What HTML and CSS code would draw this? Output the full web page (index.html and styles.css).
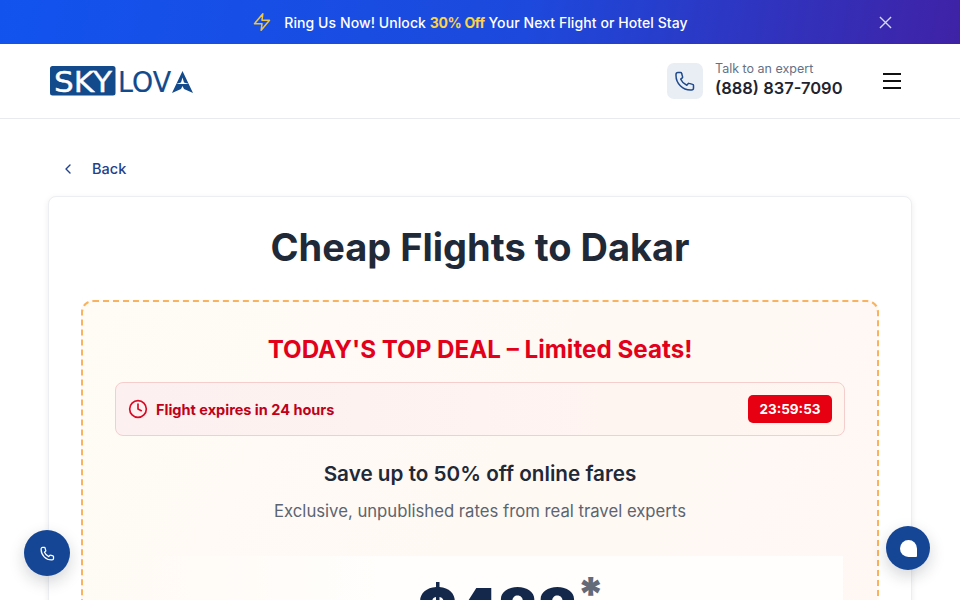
FILE: index.html
```html
<!DOCTYPE html>
<html lang="en">
<head>
<meta charset="utf-8">
<title>Cheap Flights to Dakar</title>
<link rel="stylesheet" href="styles.css">
</head>
<body>
<div class="promo">
  <div class="promo-msg">
    <svg class="promo-bolt" viewBox="0 0 24 24" fill="none" stroke="currentColor" stroke-width="1.8" stroke-linejoin="round" stroke-linecap="round"><path d="M13 2 3 14h9l-1 8 10-12h-9l1-8z"/></svg>
    <span>Ring Us Now! Unlock <b class="promo-hl">30% Off</b> Your Next Flight or Hotel Stay</span>
  </div>
  <svg class="promo-close" viewBox="0 0 14 14" fill="none" stroke="currentColor" stroke-width="1.4"><path d="M1 1l12 12M13 1 1 13"/></svg>
</div>
<header class="topbar">
  <svg class="logo" viewBox="0 0 144 30" role="img" aria-label="SKYLOVA">
    <rect x="0" y="0" width="65.500" height="29.500" rx="2.500" fill="#124a8c"/>
    <text class="logo-sky" x="4" y="26" textLength="58" lengthAdjust="spacingAndGlyphs">SKY</text>
    <text class="logo-lova" x="68" y="26" textLength="53" lengthAdjust="spacingAndGlyphs">LOV</text>
    <path d="M132.500 5 122 27l9-4 1.500-3 1.500 3 9 4z" fill="#124a8c"/>
    <path d="M126 18h13l-5-1.500-1.500-5-1.500 5z" fill="#fff"/>
  </svg>
  <div class="topbar-right">
    <div class="phone-tile">
      <svg viewBox="0 0 24 24" fill="none" stroke="currentColor" stroke-width="1.5" stroke-linecap="round" stroke-linejoin="round"><path d="M5 3.500h2.600c.5 0 .9.300 1 .8l1 3.600c.1.400 0 .8-.3 1L7.700 10.200a12 12 0 0 0 6.100 6.100l1.300-1.600c.3-.3.700-.4 1-.3l3.600 1c.5.100.8.500.8 1V19c0 1.100-.9 2-2 2h-1C9.600 21 3 14.400 3 6.500v-1c0-1.100.9-2 2-2z"/></svg>
    </div>
    <div class="expert">
      <div class="expert-label">Talk to an expert</div>
      <div class="expert-num">(888) 837-7090</div>
    </div>
    <div class="burger"><i></i><i></i><i></i></div>
  </div>
</header>
<main class="page">
  <a class="back" href="#">
    <svg viewBox="0 0 10 12" fill="none" stroke="currentColor" stroke-width="1.4" stroke-linecap="round" stroke-linejoin="round"><path d="M7 2 3 6l4 4"/></svg>
    <span>Back</span>
  </a>
  <section class="card">
    <h1 class="title">Cheap Flights to Dakar</h1>
    <div class="deal">
      <h2 class="deal-title">TODAY'S TOP DEAL – Limited Seats!</h2>
      <div class="expiry">
        <div class="expiry-left">
          <svg viewBox="0 0 24 24" fill="none" stroke="currentColor" stroke-width="2" stroke-linecap="round" stroke-linejoin="round"><circle cx="12" cy="12" r="10"/><path d="M12 6v6l4 2"/></svg>
          <span>Flight expires in 24 hours</span>
        </div>
        <div class="timer">23:59:53</div>
      </div>
      <h3 class="save">Save up to 50% off online fares</h3>
      <p class="sub">Exclusive, unpublished rates from real travel experts</p>
      <div class="price-panel">
        <div class="price">$488<sup class="star">*</sup></div>
      </div>
    </div>
  </section>
</main>
<button class="fab fab-call" aria-label="Call">
  <svg viewBox="0 0 24 24" fill="none" stroke="currentColor" stroke-width="1.8" stroke-linecap="round" stroke-linejoin="round"><path d="M5 3.500h2.600c.5 0 .9.300 1 .8l1 3.600c.1.400 0 .8-.3 1L7.700 10.200a12 12 0 0 0 6.100 6.100l1.300-1.600c.3-.3.700-.4 1-.3l3.600 1c.5.100.8.500.8 1V19c0 1.100-.9 2-2 2h-1C9.600 21 3 14.400 3 6.500v-1c0-1.100.9-2 2-2z"/></svg>
</button>
<button class="fab fab-chat" aria-label="Chat"><i class="chat-bubble"></i></button>
</body>
</html>
```
FILE: styles.css
```css
* { box-sizing: border-box; }
html, body { margin: 0; height: 600px; overflow: hidden; }
body { font-family: Inter, "Open Sans", sans-serif; background: #fff; color: #1f2937; }

.promo { height: 44px; display: flex; align-items: center; justify-content: center; position: relative; color: #fff; background: linear-gradient(100deg, #1253ee 0%, #1d49dc 55%, #3f22a6 100%); }
.promo-msg { display: flex; align-items: center; gap: 12px; margin-right: 20px; font-size: 14px; font-weight: 500; letter-spacing: .08px; }
.promo-bolt { width: 20px; height: 20px; color: #ecc544; }
.promo-hl { color: #fcd34d; font-weight: 700; letter-spacing: -.35px; }
.promo-close { position: absolute; right: 68px; top: 16px; width: 13px; height: 13px; color: #d7dcf5; }

.topbar { height: 75px; display: flex; align-items: center; justify-content: space-between; padding: 0 59px 0 50px; border-bottom: 1px solid #e8eaed; }
.logo { width: 144px; height: 30px; display: block; overflow: visible; }
.logo-sky { font-family: "DejaVu Sans", sans-serif; font-size: 27.500px; fill: #fff; stroke: #fff; stroke-width: .4px; }
.logo-lova { font-family: "DejaVu Sans", sans-serif; font-size: 28.500px; fill: #124a8c; stroke: #124a8c; stroke-width: .2px; }
.topbar-right { display: flex; align-items: center; }
.phone-tile { width: 36px; height: 36px; border-radius: 7px; background: #e9edf4; display: flex; align-items: center; justify-content: center; color: #1e4a8c; margin-right: 12px; }
.phone-tile svg { width: 24px; height: 24px; }
.expert { width: 168px; }
.expert-label { font-size: 12.500px; line-height: 16px; color: #667085; margin-top: -2px; }
.expert-num { font-size: 16.500px; line-height: 22px; font-weight: 600; color: #1f2430; }
.burger { width: 18px; display: flex; flex-direction: column; gap: 5px; }
.burger i { display: block; height: 2px; background: #111; }

.page { padding: 0 48px; }
.back { height: 77px; display: flex; align-items: center; gap: 19px; padding: 22px 0 0 15px; color: #22418c; text-decoration: none; font-size: 14.500px; font-weight: 500; }
.back svg { width: 10px; height: 12px; }

.card { background: #fff; border: 1px solid #eceef1; border-radius: 8px; box-shadow: 0 2px 6px rgba(16, 24, 40, .08); padding: 26px 32px 0; text-align: center; height: 500px; }
.title { margin: 0 0 29px; font-size: 38px; line-height: 48px; font-weight: 700; color: #1f2937; }
.deal { height: 400px; border: 2px dashed #f9b35e; border-radius: 12px; background: linear-gradient(120deg, #fffbf5, #fff7f3); padding: 31px 32px 0; }
.deal-title { margin: 0 0 15px; font-size: 24.200px; line-height: 34px; font-weight: 700; color: #e3001b; }
.expiry { height: 54px; display: flex; align-items: center; justify-content: space-between; padding: 0 12px; border: 1px solid #f6cdcd; border-radius: 8px; background: linear-gradient(90deg, #fdf0f0, #fff6f0); }
.expiry-left { display: flex; align-items: center; gap: 8px; color: #c00018; font-size: 14.500px; font-weight: 700; }
.expiry-left svg { width: 20px; height: 20px; color: #d80a25; }
.timer { width: 84px; height: 28px; border-radius: 5px; background: #e60012; color: #fff; font-size: 13.500px; font-weight: 700; line-height: 28px; text-align: center; }
.save { margin: 24px 0 0; font-size: 20.700px; line-height: 28px; font-weight: 600; color: #1f2937; }
.sub { margin: 11px 0 0; font-size: 16.700px; line-height: 24px; color: #5b6470; }
.price-panel { margin: 33px 2px 0 12px; height: 100px; background: linear-gradient(90deg, rgba(255, 254, 252, 0) 0%, #fffefc 35%, #fffefc 100%); }
.price { font-size: 60px; line-height: 72px; font-weight: 900; letter-spacing: -1px; color: #14284b; padding: 18px 0 0 52px; }
.star { font-size: 46px; font-weight: 900; letter-spacing: 0; color: #636a78; line-height: 0; vertical-align: 22px; }

.fab { position: fixed; border: 0; padding: 0; border-radius: 50%; background: #154696; color: #fff; display: flex; align-items: center; justify-content: center; box-shadow: 0 6px 16px rgba(16, 24, 40, .18); }
.fab-call { left: 24px; top: 530px; width: 46px; height: 46px; }
.fab-call svg { width: 17px; height: 17px; }
.fab-chat { left: 886px; top: 526px; width: 44px; height: 44px; }
.chat-bubble { display: block; width: 17px; height: 17px; background: #fff; border-radius: 50% 50% 1px 50%; }
```
